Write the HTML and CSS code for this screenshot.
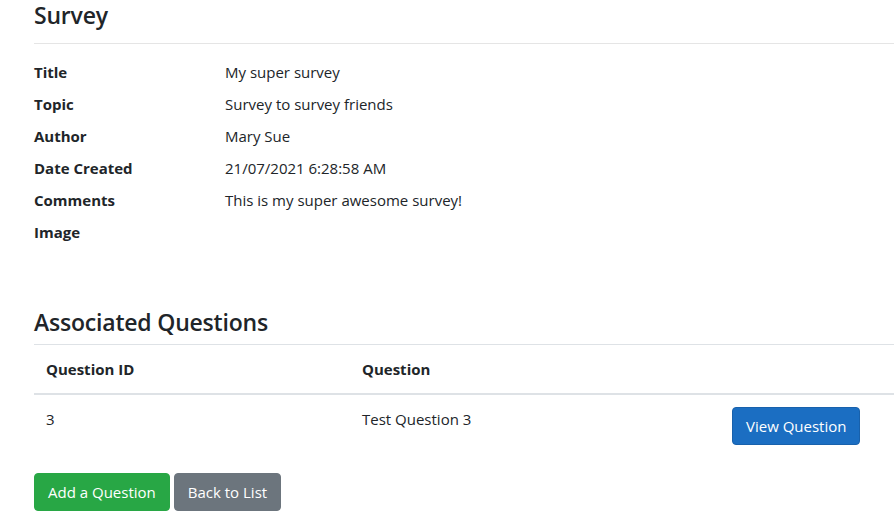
FILE: index.html
```html
<!DOCTYPE html>
<html lang="en">
<head>
<meta charset="utf-8">
<title>Survey</title>
<link rel="stylesheet" href="styles.css">
</head>
<body>
<main class="page">
  <h4 class="page-title">Survey</h4>
  <hr class="rule">
  <dl class="details">
    <dt>Title</dt><dd>My super survey</dd>
    <dt>Topic</dt><dd>Survey to survey friends</dd>
    <dt>Author</dt><dd>Mary Sue</dd>
    <dt>Date Created</dt><dd>21/07/2021 6:28:58 AM</dd>
    <dt>Comments</dt><dd>This is my super awesome survey!</dd>
    <dt>Image</dt><dd></dd>
  </dl>

  <h4 class="section-title">Associated Questions</h4>
  <table class="table">
    <thead>
      <tr><th class="c1">Question ID</th><th class="c2">Question</th><th class="c3"></th></tr>
    </thead>
    <tbody>
      <tr><td>3</td><td>Test Question 3</td><td><a class="btn btn-primary" href="#">View Question</a></td></tr>
    </tbody>
  </table>
  <div class="actions">
    <a class="btn btn-success" href="#">Add a Question</a>
    <a class="btn btn-secondary" href="#">Back to List</a>
  </div>
</main>
</body>
</html>
```

FILE: styles.css
```css
html, body {
  margin: 0;
  padding: 0;
  overflow: hidden;
  background: #fff;
}
body {
  font-family: "Open Sans", "Noto Sans", "Liberation Sans", sans-serif;
  font-size: 15px;
  line-height: 24px;
  color: #212529;
}
.page {
  padding-left: 34px;
}
.page-title {
  margin: 0;
  padding-top: 2px;
  font-size: 23px;
  font-weight: 600;
  line-height: 27px;
  letter-spacing: -0.2px;
}
.rule {
  margin: 14px 0 16px 0;
  border: 0;
  border-top: 1px solid #e5e5e5;
  height: 0;
}
.details {
  display: grid;
  grid-template-columns: 191px 1fr;
  margin: 0;
}
.details dt {
  font-weight: 700;
  margin: 0;
  min-height: 24px;
}
.details dd {
  margin: 0 0 8px 0;
}
.section-title {
  margin: 63px 0 8px 0;
  padding-top: 2px;
  font-size: 23px;
  font-weight: 600;
  line-height: 27px;
  letter-spacing: -0.2px;
}
.table {
  width: 100%;
  border-collapse: collapse;
  margin-bottom: 16px;
}
.table th, .table td {
  text-align: left;
  vertical-align: top;
  padding: 12px;
  border-top: 1px solid #dee2e6;
}
.table thead th {
  border-bottom: 2px solid #dee2e6;
  font-weight: 700;
}
.c1 { width: 292px; }
.c2 { width: 346px; }
.btn {
  display: inline-block;
  padding: 6px 13px;
  border: 1px solid transparent;
  border-radius: 4px;
  color: #fff;
  text-decoration: none;
  font-size: 15px;
  line-height: 24px;
}
.btn-primary { background: #1b6ec2; border-color: #1861ac; }
.btn-success { background: #28a745; border-color: #28a745; }
.btn-secondary { background: #6c757d; border-color: #6c757d; }
.actions {
  display: flex;
  gap: 4px;
}
```
